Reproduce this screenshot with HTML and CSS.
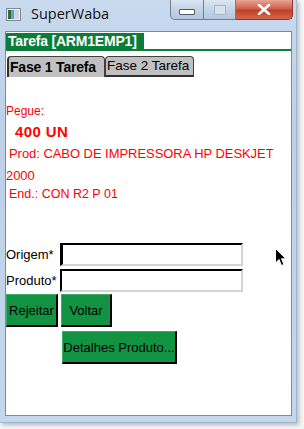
FILE: index.html
```html
<!DOCTYPE html>
<html>
<head>
<meta charset="utf-8">
<link rel="stylesheet" href="styles.css">
</head>
<body>
<div class="window">
  <div class="titlebar">
    <svg class="appicon" width="15" height="13" viewBox="0 0 15 13">
      <rect x="0.5" y="0.5" width="14" height="12" fill="#e8edf3" stroke="#7d8b9b"/>
      <rect x="2" y="2" width="3" height="9" fill="#2f6e3a"/>
      <rect x="5" y="2" width="3" height="9" fill="#6a9ad0"/>
      <rect x="8" y="2" width="5" height="9" fill="#cfd8e2"/>
    </svg>
    <span class="title">SuperWaba</span>
    <div class="controls">
      <div class="cbtn min"><span class="minbar"></span></div>
      <div class="cbtn max"><span class="maxbox"></span></div>
      <div class="cbtn close">
        <svg width="14" height="11" viewBox="0 0 14 11"><path d="M2 1 L12 10 M12 1 L2 10" stroke="#fff" stroke-width="2.6" stroke-linecap="round"/></svg>
      </div>
    </div>
  </div>
  <div class="client">
    <div class="header"><span class="htitle">Tarefa [ARM1EMP1]</span></div>
    <div class="tabs">
      <div class="tab active">Fase 1 Tarefa</div>
      <div class="tab">Fase 2 Tarefa</div>
    </div>
    <div class="info">
      <div class="pegue">Pegue:</div>
      <div class="qty">400 UN</div>
      <div class="line prod ind">Prod: CABO DE IMPRESSORA HP DESKJET</div>
      <div class="line prod">2000</div>
      <div class="line end ind">End.: CON R2 P 01</div>
    </div>
    <div class="form">
      <div class="row"><span class="lbl">Origem*</span><span class="field first"></span></div>
      <div class="row"><span class="lbl">Produto*</span><span class="field"></span></div>
      <div class="btns">
        <div class="btn b1">Rejeitar</div>
        <div class="btn b2">Voltar</div>
      </div>
      <div class="btns2">
        <div class="btn b3">Detalhes Produto...</div>
      </div>
    </div>
    <svg class="cursor" width="12" height="19" viewBox="0 0 12 19">
      <path d="M0.5 0.5 L0.5 15 L4 11.5 L6.5 17.5 L9 16.5 L6.5 10.8 L11 10.8 Z" fill="#000" stroke="#fff" stroke-width="1"/>
    </svg>
  </div>
</div>
</body>
</html>
```
FILE: styles.css
```css
html, body {
  margin: 0;
  padding: 0;
}
body {
  width: 304px;
  height: 429px;
  background: #f4f6f8;
  font-family: "Liberation Sans", Arial, sans-serif;
  overflow: hidden;
}
.window {
  width: 297px;
  height: 423px;
  box-sizing: border-box;
  padding: 0 4px 0 5px;
  background: linear-gradient(180deg, #c9daee 0%, #bcd0e8 30%, #c5d7ec 100%);
  border-right: 1px solid #a4b6cb;
  border-bottom: 1px solid #a4b6cb;
  box-shadow: 2px 2px 4px rgba(0,0,0,0.25);
  display: flex;
  flex-direction: column;
}
.titlebar {
  height: 31px;
  display: flex;
  align-items: flex-start;
}
.appicon {
  margin-top: 8px;
  margin-left: 1px;
}
.title {
  margin-left: 10px;
  margin-top: 4px;
  font-family: "Open Sans", "Noto Sans", sans-serif;
  font-size: 14.5px;
  color: #111;
}
.controls {
  margin-left: auto;
  display: flex;
  margin-right: -1px;
}
.cbtn {
  height: 20px;
  box-sizing: border-box;
  border: 1px solid #6d7f94;
  border-top: none;
  display: flex;
  align-items: center;
  justify-content: center;
}
.min {
  width: 34px;
  border-radius: 0 0 0 5px;
  background: linear-gradient(180deg, #dde7f3 0%, #c4d3e6 50%, #b4c6dd 100%);
}
.max {
  width: 32px;
  border-left: none;
  background: linear-gradient(180deg, #dde7f3 0%, #c4d3e6 50%, #b4c6dd 100%);
}
.close {
  width: 57px;
  border-left: none;
  border-radius: 0 0 5px 0;
  background: linear-gradient(180deg, #e8a595 0%, #d1614a 45%, #c03f27 55%, #d66a4e 100%);
  border-color: #8b3a2c;
}
.minbar {
  width: 14px;
  height: 4px;
  background: #fff;
  border: 1px solid #4b5a6c;
  border-radius: 1px;
  margin-top: 4px;
}
.maxbox {
  width: 10px;
  height: 8px;
  border: 1px solid #a6b6c8;
  background: #d7e1ed;
}
.client {
  flex: 1;
  margin-bottom: 6px;
  background: #fff;
  border: 1px solid #7c8a9c;
  position: relative;
  display: flex;
  flex-direction: column;
}
.header {
  margin-top: 1px;
  border-bottom: 2px solid #0b7d3b;
  display: flex;
}
.htitle {
  background: #0b7d3b;
  color: #fff;
  font-weight: bold;
  font-size: 14px;
  line-height: 16px;
  padding: 0 0 0 2px;
  width: 136px;
  letter-spacing: -0.2px;
  white-space: nowrap;
}
.tabs {
  display: flex;
  align-items: flex-end;
  margin-top: 5px;
  margin-left: 1px;
}
.tab {
  background: #c0c0c0;
  color: #000;
  font-size: 13.5px;
  line-height: 18px;
  border: 1px solid #404040;
  border-bottom: 2px solid #303030;
  border-radius: 4px 4px 0 0;
  padding: 0 1px;
  height: 18px;
  white-space: nowrap;
}
.tab.active {
  font-weight: bold;
  font-size: 14px;
  height: 20px;
  line-height: 20px;
  border-left: 2px solid #303030;
  border-bottom: none;
  width: 94px;
  padding: 0 0 0 1px;
  letter-spacing: -0.2px;
}
.tab:not(.active) {
  width: 85px;
}
.info {
  margin-top: 27px;
  color: #ff0000;
  font-size: 12px;
}
.pegue {
  line-height: 14px;
}
.qty {
  font-weight: bold;
  font-size: 15px;
  line-height: 16px;
  margin-top: 6px;
  padding-left: 9px;
  letter-spacing: 0.4px;
}
.line {
  line-height: 17px;
}
.prod {
  font-size: 13px;
  letter-spacing: -0.05px;
}
.qty + .line {
  margin-top: 5px;
}
.prod + .prod {
  margin-top: 5px;
}
.end {
  font-size: 12.5px;
  margin-top: 2px;
}
.ind {
  padding-left: 3px;
}
.form {
  margin-top: 38px;
  font-size: 13px;
}
.row {
  display: flex;
  align-items: center;
  height: 26px;
}
.lbl {
  width: 54px;
  color: #000;
  white-space: nowrap;
}
.field {
  width: 179px;
  height: 19px;
  border-top: 2px solid #000;
  border-left: 2px solid #000;
  border-right: 2px solid #d4d4d4;
  border-bottom: 2px solid #d4d4d4;
  background: #fff;
}
.field.first {
  border-left: 3px solid #000;
  width: 178px;
}
.btns {
  display: flex;
  gap: 3px;
  margin-top: 1px;
}
.btn {
  background: #129243;
  color: #000;
  font-size: 13px;
  height: 33px;
  box-sizing: border-box;
  display: flex;
  align-items: center;
  justify-content: center;
  border-top: 1px solid #3cae66;
  border-left: 1px solid #3cae66;
  border-right: 2px solid #000;
  border-bottom: 2px solid #000;
  white-space: nowrap;
}
.b1 { width: 52px; }
.b2 { width: 51px; }
.btns2 {
  display: flex;
  margin-top: 4px;
  padding-left: 56px;
}
.b3 { width: 115px; }
.cursor {
  position: absolute;
  left: 269px;
  top: 216px;
}
```
